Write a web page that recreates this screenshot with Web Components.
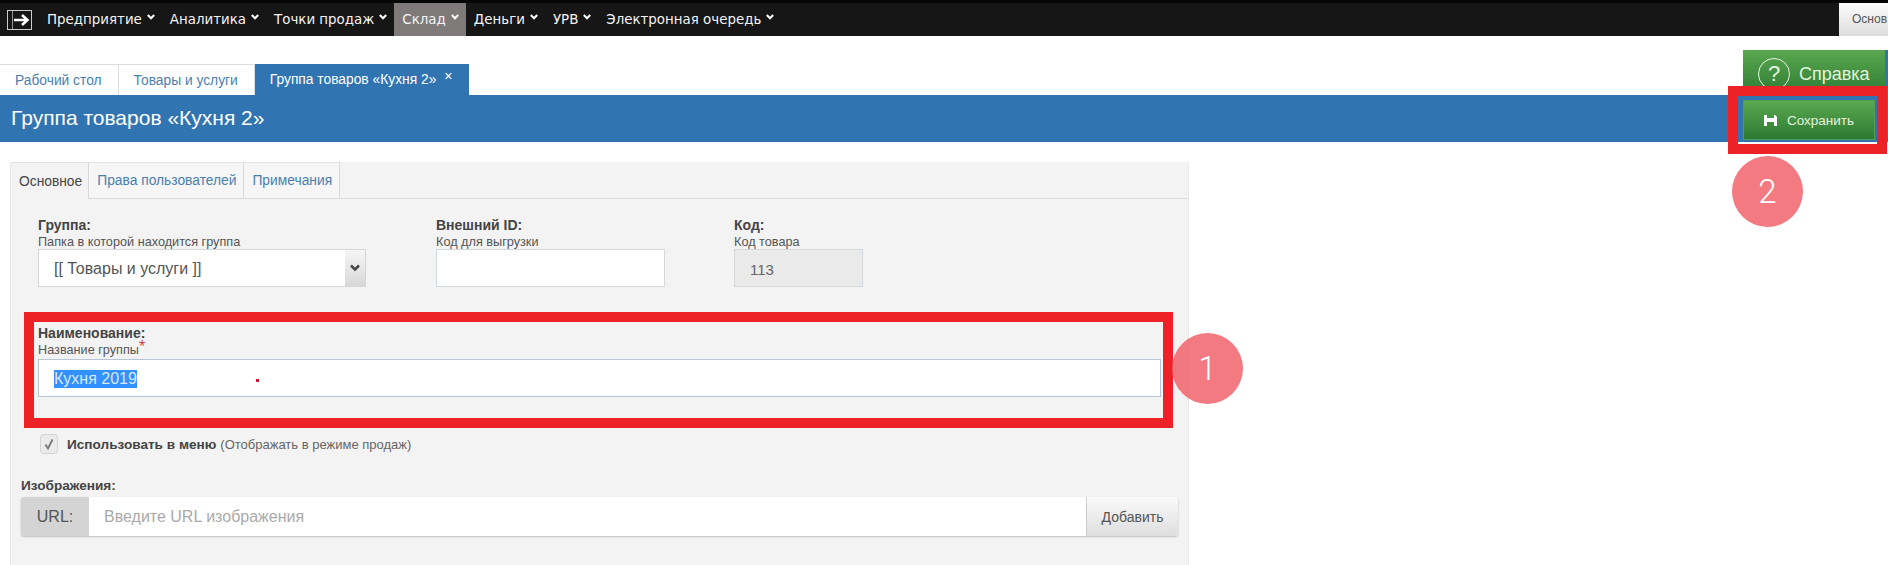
<!DOCTYPE html>
<html lang="ru">
<head>
<meta charset="utf-8">
<title>Группа товаров</title>
<style>
  html, body { margin: 0; height: 565px; overflow: hidden; background: #fff; }
  body { font-family: "Liberation Sans", Arial, sans-serif; color: #444; position: relative; }
</style>
</head>
<body>
<app-topbar>
  <nav-item>Предприятие</nav-item>
  <nav-item>Аналитика</nav-item>
  <nav-item>Точки продаж</nav-item>
  <nav-item active>Склад</nav-item>
  <nav-item>Деньги</nav-item>
  <nav-item>УРВ</nav-item>
  <nav-item>Электронная очередь</nav-item>
</app-topbar>
<page-tabs>
  <page-tab>Рабочий стол</page-tab>
  <page-tab>Товары и услуги</page-tab>
  <page-tab active closable>Группа товаров «Кухня 2»</page-tab>
</page-tabs>
<title-bar>Группа товаров «Кухня 2»</title-bar>
<group-form></group-form>
<page-notes></page-notes>

<script>
const nav = document.createElement('template');
nav.innerHTML = `
  <style>
    :host {
      display: flex;
      align-items: center;
      height: 36px;
      background: #171616;
      border-top: 3px solid #050505;
      box-sizing: border-box;
      padding-left: 7px;
    }
    svg { flex: none; margin-right: 7px; }
    nav { display: flex; align-items: stretch; height: 100%; }
    .user {
      margin-left: auto;
      align-self: stretch;
      width: 49px;
      flex: none;
      box-sizing: border-box;
      padding: 9px 0 0 13px;
      font-size: 12px;
      color: #555;
      white-space: nowrap;
      background: linear-gradient(#fdfdfd, #dcdcdc);
    }
  </style>
  <svg width="25" height="20" viewBox="0 0 25 20">
    <rect x=".5" y=".5" width="24" height="19" fill="none" stroke="#ccc"/>
    <path d="M5.500 1v18" stroke="#999"/>
    <path d="M7 10h13M15 5l5.500 5-5.500 5" fill="none" stroke="#fff" stroke-width="2.600"/>
  </svg>
  <nav><slot></slot></nav>
  <div class="user">Основ</div>
`;
class AppTopbar extends HTMLElement {
  connectedCallback() {
    this.attachShadow({ mode: 'open' }).appendChild(nav.content.cloneNode(true));
  }
}

const navItem = document.createElement('template');
navItem.innerHTML = `
  <style>
    :host {
      display: flex;
      align-items: center;
      gap: 5px;
      padding: 0 7px 0 8px;
      font: 13.400px "DejaVu Sans", sans-serif;
      color: #f4f4f4;
      white-space: nowrap;
    }
    :host([active]) { background: #7f7a7a; }
    svg { margin-top: -5px; }
  </style>
  <slot></slot>
  <svg width="8" height="6" viewBox="0 0 8 6"><path d="M.8 1L4 4.300 7.200 1" fill="none" stroke="#fff" stroke-width="2"/></svg>
`;
class NavItem extends HTMLElement {
  connectedCallback() {
    this.attachShadow({ mode: 'open' }).appendChild(navItem.content.cloneNode(true));
  }
}

class PageTabs extends HTMLElement {
  connectedCallback() {
    this.attachShadow({ mode: 'open' }).innerHTML = `
      <style>
        :host { display: flex; height: 31px; margin-top: 28px; }
      </style>
      <slot></slot>`;
  }
}

class PageTab extends HTMLElement {
  connectedCallback() {
    const close = this.hasAttribute('closable') ? '<span class="x">×</span>' : '';
    this.attachShadow({ mode: 'open' }).innerHTML = `
      <style>
        :host {
          display: flex;
          align-items: center;
          box-sizing: border-box;
          padding: 0 16px 0 15px;
          font-size: 13.800px;
          color: #4a7fb0;
          background: #fff;
          border-top: 1px solid #ddd;
          border-right: 1px solid #ddd;
          white-space: nowrap;
        }
        :host([active]) { background: #3174b2; color: #fff; border: 0; gap: 8px; }
        .x { font-size: 14px; margin-top: -7px; }
      </style>
      <slot></slot>${close}`;
  }
}

class TitleBar extends HTMLElement {
  connectedCallback() {
    this.attachShadow({ mode: 'open' }).innerHTML = `
      <style>
        :host {
          display: flex;
          align-items: center;
          height: 47px;
          box-sizing: border-box;
          padding: 0 0 1px 11px;
          background: #3174b2;
          color: #fff;
          font-size: 21px;
          white-space: nowrap;
        }
      </style>
      <slot></slot>`;
  }
}

// подпись, подсказка и поле под ними
class FormField extends HTMLElement {
  connectedCallback() {
    const label = this.getAttribute('label');
    const hint = this.getAttribute('hint');
    const star = this.hasAttribute('required') ? '<i>*</i>' : '';
    this.attachShadow({ mode: 'open' }).innerHTML = `
      <style>
        :host { display: block; }
        .label { font-size: 14px; font-weight: bold; line-height: 16px; color: #444; }
        .hint { font-size: 12.700px; line-height: 14px; margin: 2px 0 var(--hint-after, 0); color: #555; }
        i { color: #e03a2e; font-style: normal; font-size: 16px; line-height: 8px; vertical-align: 2px; }
      </style>
      <div class="label">${label}</div>
      <div class="hint">${hint}${star}</div>
      <slot></slot>`;
  }
}

class TextBox extends HTMLElement {
  connectedCallback() {
    this.attachShadow({ mode: 'open' }).innerHTML = `
      <style>
        :host {
          display: flex;
          align-items: center;
          box-sizing: border-box;
          height: 38px;
          padding: 2px 0 0 15px;
          background: #fff;
          border: 1px solid #d3d8dc;
          font-size: 16px;
          color: #555;
          white-space: nowrap;
        }
        :host([disabled]) { background: #eaeaea; font-size: 15px; color: #666; }
        :host([focused]) { border-color: #b7c6d6; position: relative; }
        .arrow {
          margin: -2px 0 0 auto;
          align-self: stretch;
          width: 20px;
          display: flex;
          align-items: center;
          justify-content: center;
          background: linear-gradient(#f6f6f6, #d8d8d8);
        }
      </style>
      <slot></slot>
      ${this.hasAttribute('select') ? `<span class="arrow"><svg width="10" height="8" viewBox="0 0 10 8"><path d="M1 1.500l4 4 4-4" fill="none" stroke="#444" stroke-width="2.500"/></svg></span>` : ''}`;
  }
}

const form = document.createElement('template');
form.innerHTML = `
  <style>
    :host {
      display: block;
      box-sizing: border-box;
      width: 1179px;
      height: 403px;
      margin: 20px 0 0 10px;
      background: #f3f3f3;
      border-left: 1px solid #e8e8e8;
      border-right: 1px solid #e8e8e8;
    }
    .tabs { display: flex; height: 37px; box-sizing: border-box; border-bottom: 1px solid #ddd; }
    .tabs span {
      display: flex;
      align-items: center;
      padding: 0 7px 0 8px;
      font-size: 13.800px;
      color: #4a7fb0;
      box-sizing: border-box;
      border-right: 1px solid #d8d8d8;
      border-top: 1px solid #e2e2e2;
      white-space: nowrap;
      background: #f6f6f6;
    }
    .tabs .on {
      color: #444;
      height: 37px;
      padding: 0 6px 0 8px;
      background: #f3f3f3;
    }
    .body { padding: 18px 10px 0 27px; }
    .row { display: flex; }
    .name { margin-top: 38px; --hint-after: 2px; }
    .name text-box { width: 1123px; }
    .sel { width: 328px; }
    .ext { width: 229px; margin-left: 70px; }
    .code { width: 129px; margin-left: 69px; }
    .check {
      display: flex;
      align-items: center;
      height: 20px;
      margin: 37px 0 0 2px;
      white-space: nowrap;
    }
    .box {
      width: 18px;
      height: 20px;
      box-sizing: border-box;
      margin-right: 9px;
      background: #ebebeb;
      border: 1px solid #d4d4d4;
      border-radius: 4px;
      display: flex;
      align-items: center;
      justify-content: center;
    }
    .check b { font-size: 13.600px; color: #444; margin-right: 4px; }
    .check small { font-size: 13px; color: #666; }
    .images { margin: 24px 0 0 -17px; width: 1157px; }
    .images > b { display: block; font-size: 13.600px; line-height: 16px; color: #444; }
    .group {
      display: flex;
      height: 39px;
      margin-top: 3px;
      border-radius: 3px;
      box-shadow: 0 1px 2px #bbb;
      background: #fff;
      overflow: hidden;
    }
    .group span { display: flex; align-items: center; }
    .url { width: 68px; justify-content: center; background: #d4d4d4; font-size: 16px; color: #555; }
    .ph { flex: 1; padding-left: 15px; font-size: 16px; color: #aaa; }
    .add {
      width: 91px;
      justify-content: center;
      font-size: 14px;
      color: #555;
      background: linear-gradient(#fafafa, #dedede);
      border-left: 1px solid #ccc;
    }
    .sel-text { background: #3390ff; color: #d8e8ff; line-height: 18px; }
  </style>
  <div class="tabs">
    <span class="on">Основное</span><span>Права пользователей</span><span>Примечания</span>
  </div>
  <div class="body">
    <div class="row">
      <form-field class="sel" label="Группа:" hint="Папка в которой находится группа">
        <text-box select>[[ Товары и услуги ]]</text-box>
      </form-field>
      <form-field class="ext" label="Внешний ID:" hint="Код для выгрузки"><text-box></text-box></form-field>
      <form-field class="code" label="Код:" hint="Код товара"><text-box disabled>113</text-box></form-field>
    </div>
    <form-field class="name" label="Наименование:" hint="Название группы" required>
      <text-box focused><span class="sel-text">Кухня 2019</span></text-box>
    </form-field>
    <div class="check">
      <span class="box"><svg width="12" height="12" viewBox="0 0 12 12"><path d="M2.500 6.500L5 10.500 9.500 1.500" fill="none" stroke="#777" stroke-width="1.800"/></svg></span>
      <b>Использовать в меню</b><small>(Отображать в режиме продаж)</small>
    </div>
    <div class="images">
      <b>Изображения:</b>
      <div class="group">
        <span class="url">URL:</span>
        <span class="ph">Введите URL изображения</span>
        <span class="add">Добавить</span>
      </div>
    </div>
  </div>
`;
class GroupForm extends HTMLElement {
  connectedCallback() {
    this.attachShadow({ mode: 'open' }).appendChild(form.content.cloneNode(true));
  }
}

// пометки поверх скриншота: красные рамки, кружки с номерами, зелёные кнопки
class PageNotes extends HTMLElement {
  connectedCallback() {
    this.attachShadow({ mode: 'open' }).innerHTML = `
      <style>
        :host { display: contents; }
        .frame { position: absolute; box-sizing: border-box; border: 10px solid #ec2227; }
        .num {
          position: absolute;
          width: 71px;
          height: 71px;
          border-radius: 50%;
          background: rgba(241, 96, 104, .84);
          color: #fff;
          font: 300 33px/71px Roboto, sans-serif;
          text-align: center;
        }
        .dot { position: absolute; left: 256px; top: 379px; width: 3px; height: 3px; background: #d2143a; }
        .btn {
          position: absolute;
          display: flex;
          align-items: center;
          box-sizing: border-box;
          color: #e4f3df;
          background: linear-gradient(#5aa84f, #2c7a33);
          white-space: nowrap;
        }
        .help { left: 1743px; top: 50px; width: 142px; height: 46px; padding-left: 15px; gap: 9px; font-size: 18px; align-items: flex-start; padding-top: 8px; }
        .help i {
          width: 32px; height: 32px; box-sizing: border-box; border: 1px solid #e8f3e6; border-radius: 50%;
          font: 22px/30px "Liberation Sans", sans-serif; text-align: center;
        }
        .help em { font-style: normal; line-height: 32px; }
        .strip { position: absolute; left: 1885px; top: 50px; width: 3px; height: 46px; background: #3174b2; }
        .under { position: absolute; left: 1738px; top: 142px; width: 139px; height: 2px; background: #fff; }
        .save { left: 1743px; top: 100px; width: 132px; height: 40px; padding-left: 20px; gap: 10px; font-size: 13.500px; border: 1px solid #4f9c57; }
      </style>
      <div class="strip"></div>
      <div class="btn help"><i>?</i><em>Справка</em></div>
      <div class="under"></div>
      <div class="btn save">
        <svg width="13" height="11" viewBox="0 0 13 11"><path d="M0 0h3v3h7V0h1l2 2v9H0zM3 7v4h7V7z" fill="#fff"/></svg>
        Сохранить
      </div>
      <div class="frame" style="left:1728px;top:86px;width:159px;height:68px"></div>
      <div class="frame" style="left:24px;top:312px;width:1149px;height:116px"></div>
      <div class="dot"></div>
      <div class="num" style="left:1172px;top:333px">1</div>
      <div class="num" style="left:1732px;top:156px">2</div>`;
  }
}

customElements.define('form-field', FormField);
customElements.define('text-box', TextBox);
customElements.define('nav-item', NavItem);
customElements.define('page-tab', PageTab);
customElements.define('page-tabs', PageTabs);
customElements.define('title-bar', TitleBar);
customElements.define('group-form', GroupForm);
customElements.define('page-notes', PageNotes);
customElements.define('app-topbar', AppTopbar);
</script>
</body>
</html>
